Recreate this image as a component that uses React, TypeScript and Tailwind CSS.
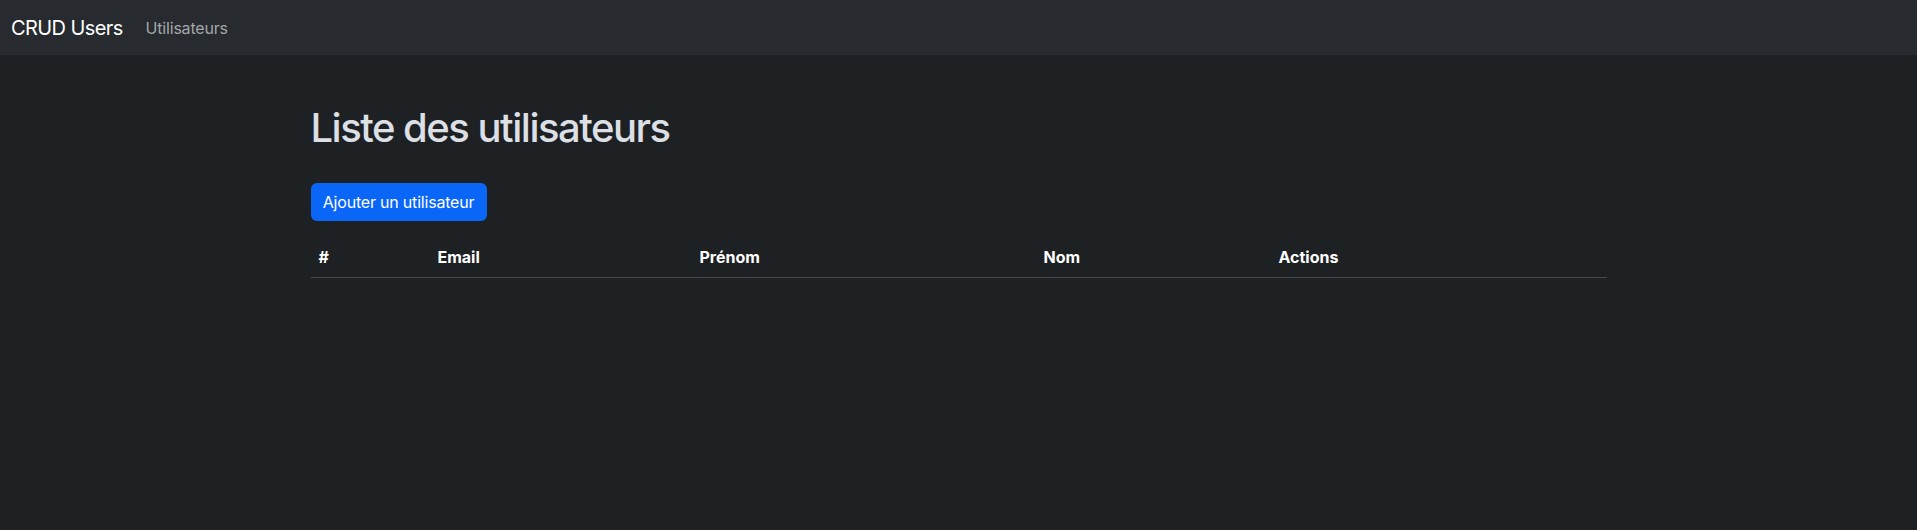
export default function App() {
  const cols = [
    { label: "#", w: "w-[119px]" },
    { label: "Email", w: "w-[262px]" },
    { label: "Prénom", w: "w-[344px]" },
    { label: "Nom", w: "w-[235px]" },
    { label: "Actions", w: "w-[336px]" },
  ];

  return (
    <div className="min-h-[530px] bg-[#1e2124] text-[#dee2e6] font-['Inter','Liberation_Sans',sans-serif]">
      {/* Navbar */}
      <nav className="h-[55px] bg-[#272a2f] flex items-center pl-[11px]">
        <span className="text-[20px] text-white mr-[23px] tracking-[-0.6px]">CRUD Users</span>
        <span className="text-[16px] text-[#a4a7aa] tracking-[-0.2px]">Utilisateurs</span>
      </nav>

      {/* Content */}
      <div className="mx-auto max-w-[1320px] px-3">
        <h1 className="mt-[49px] text-[40px] leading-[48px] font-medium text-[#dcdfe3] tracking-[-1.5px]">
          Liste des utilisateurs
        </h1>

        <button className="mt-[31px] h-[38px] w-[176px] rounded-[6px] bg-[#0a66f6] text-white text-[16px] tracking-[-0.2px]">
          Ajouter un utilisateur
        </button>

        <table className="mt-[16px] w-full table-fixed border-collapse">
          <thead>
            <tr className="border-b border-[#45484c]">
              {cols.map((c) => (
                <th
                  key={c.label}
                  className={`${c.w} h-[40px] px-2 text-left text-[16px] font-bold text-white`}
                >
                  {c.label}
                </th>
              ))}
            </tr>
          </thead>
          <tbody />
        </table>
      </div>
    </div>
  );
}
